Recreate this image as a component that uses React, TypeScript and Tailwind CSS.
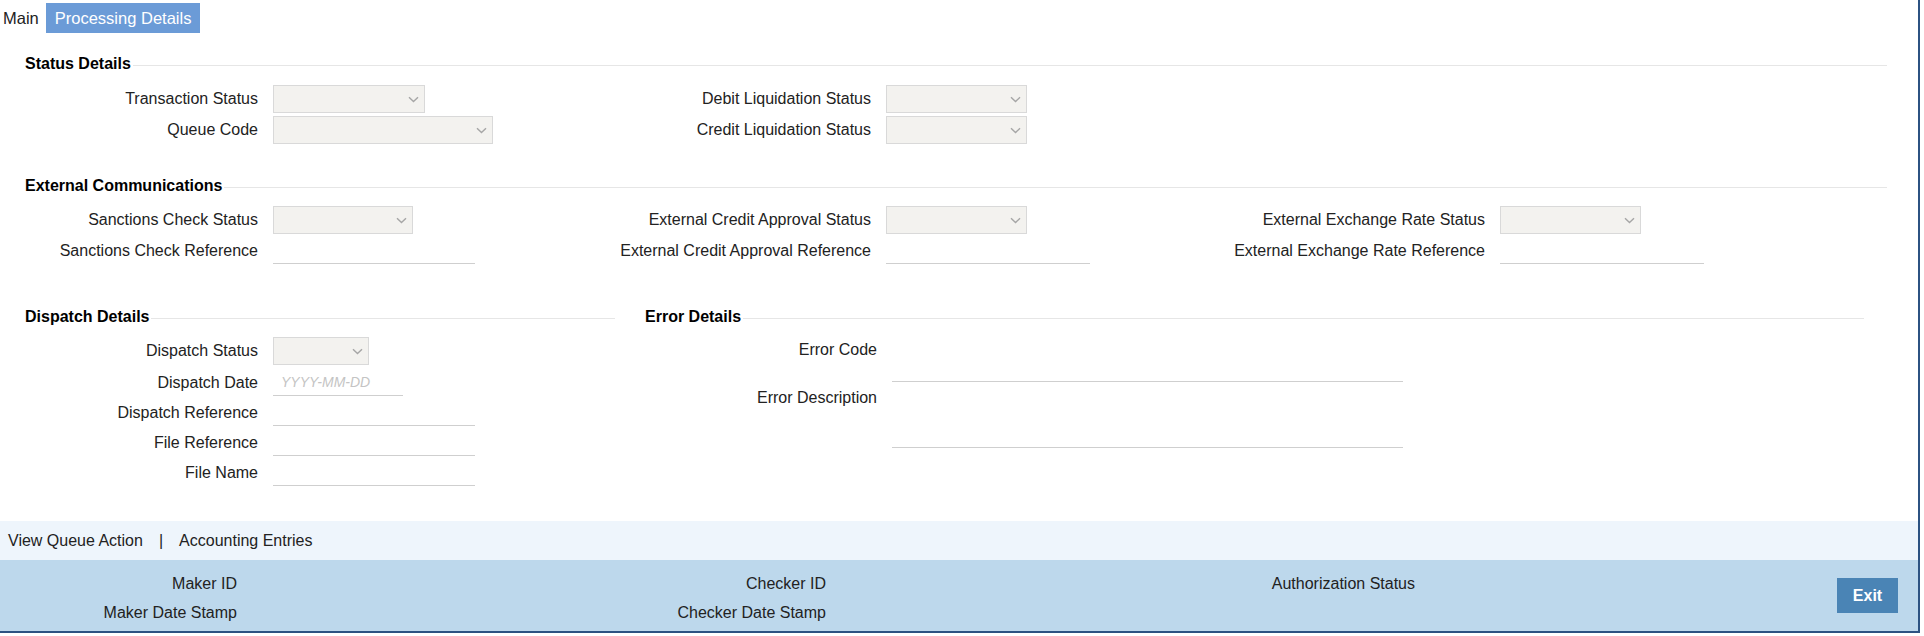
import React from "react";

const Chevron = () => (
  <svg width="11" height="7" viewBox="0 0 11 7">
    <path d="M1 1.2 L5.5 5.6 L10 1.2" fill="none" stroke="#a6a6a6" strokeWidth="1.4" />
  </svg>
);

const Select = ({ w }: { w: string }) => (
  <div className={`${w} h-[28px] border border-[#d9d9d9] bg-[#f3f2ef] flex items-center justify-end pr-[5px]`}>
    <Chevron />
  </div>
);

const TextInput = ({ w, placeholder }: { w: string; placeholder?: string }) => (
  <div className={`${w} h-[26px] border-b border-[#cfcfcf] flex items-center pl-[8px]`}>
    {placeholder ? (
      <span className="text-[14px] italic text-[#c4c4c4]">{placeholder}</span>
    ) : null}
  </div>
);

const Row = ({
  label,
  children,
  className = "",
  lw = "w-[258px]",
}: {
  label: string;
  children: React.ReactNode;
  className?: string;
  lw?: string;
}) => (
  <div className={`flex items-center gap-[15px] ${className}`}>
    <div className={`${lw} text-right whitespace-nowrap leading-[20px]`}>{label}</div>
    {children}
  </div>
);

const Heading = ({ title, className = "" }: { title: string; className?: string }) => (
  <div className={`flex items-start ${className}`}>
    <span className="font-bold text-black leading-[20px] whitespace-nowrap">{title}</span>
    <div className="flex-1 h-px bg-[#e6e6e6] mt-[11px] ml-[2px]" />
  </div>
);

export default function App() {
  return (
    <div className="w-[1920px] h-[633px] border-r-2 border-b-2 border-[#2c5282] flex flex-col bg-white text-[#222] text-[16px] font-['Liberation_Sans',Arial,sans-serif]">
      <div className="flex-1 flex flex-col">
        {/* Tabs */}
        <div className="mt-[3px] h-[30px] flex items-center pl-[3px] text-[16.5px]">
          <span>Main</span>
          <span className="ml-[7px] h-full px-[9px] flex items-center bg-[#6b9bd7] text-white">
            Processing Details
          </span>
        </div>

        {/* Status Details */}
        <Heading title="Status Details" className="mt-[21px] pl-[25px] pr-[31px]" />
        <div className="mt-[11px] flex">
          <div className="w-[613px] flex flex-col gap-[3px]">
            <Row label="Transaction Status">
              <Select w="w-[152px]" />
            </Row>
            <Row label="Queue Code">
              <Select w="w-[220px]" />
            </Row>
          </div>
          <div className="w-[615px] flex flex-col gap-[3px]">
            <Row label="Debit Liquidation Status">
              <Select w="w-[141px]" />
            </Row>
            <Row label="Credit Liquidation Status">
              <Select w="w-[141px]" />
            </Row>
          </div>
        </div>

        {/* External Communications */}
        <Heading title="External Communications" className="mt-[32px] pl-[25px] pr-[31px]" />
        <div className="mt-[10px] flex">
          <div className="w-[613px] flex flex-col gap-[4px]">
            <Row label="Sanctions Check Status">
              <Select w="w-[140px]" />
            </Row>
            <Row label="Sanctions Check Reference">
              <TextInput w="w-[202px]" />
            </Row>
          </div>
          <div className="w-[615px] flex flex-col gap-[4px]">
            <Row label="External Credit Approval Status">
              <Select w="w-[141px]" />
            </Row>
            <Row label="External Credit Approval Reference">
              <TextInput w="w-[204px]" />
            </Row>
          </div>
          <div className="w-[615px] flex flex-col gap-[4px]">
            <Row label="External Exchange Rate Status" lw="w-[257px]">
              <Select w="w-[141px]" />
            </Row>
            <Row label="External Exchange Rate Reference" lw="w-[257px]">
              <TextInput w="w-[204px]" />
            </Row>
          </div>
        </div>

        {/* Dispatch + Error */}
        <div className="mt-[43px] flex">
          <div className="w-[615px] flex flex-col">
            <Heading title="Dispatch Details" className="pl-[25px]" />
            <Row label="Dispatch Status" className="mt-[10px]">
              <Select w="w-[96px]" />
            </Row>
            <Row label="Dispatch Date" className="mt-[5px]">
              <TextInput w="w-[130px]" placeholder="YYYY-MM-DD" />
            </Row>
            <Row label="Dispatch Reference" className="mt-[4px]">
              <TextInput w="w-[202px]" />
            </Row>
            <Row label="File Reference" className="mt-[4px]">
              <TextInput w="w-[202px]" />
            </Row>
            <Row label="File Name" className="mt-[4px]">
              <TextInput w="w-[202px]" />
            </Row>
          </div>
          <div className="w-[1249px] flex flex-col">
            <Heading title="Error Details" className="pl-[30px]" />
            <div className="mt-[10px] flex items-start gap-[15px]">
              <div className="w-[262px] pt-[3px] text-right leading-[20px] whitespace-nowrap">Error Code</div>
              <div className="w-[511px] h-[45px] border-b border-[#cfcfcf]" />
            </div>
            <div className="mt-[4px] flex items-start gap-[15px]">
              <div className="w-[262px] pt-[2px] text-right leading-[20px] whitespace-nowrap">Error Description</div>
              <div className="w-[511px] h-[62px] border-b border-[#cfcfcf]" />
            </div>
          </div>
        </div>
      </div>

      {/* Footer links */}
      <div className="h-[39px] bg-[#eef5fc] flex items-center pl-[8px] gap-[16px]">
        <span>View Queue Action</span>
        <span>|</span>
        <span>Accounting Entries</span>
      </div>

      {/* Audit bar */}
      <div className="h-[71px] bg-[#bdd8ec] flex items-start">
        <div className="flex pt-[9px]">
          <div className="w-[589px] flex flex-col">
            <div className="w-[237px] h-[29px] flex items-center justify-end whitespace-nowrap">Maker ID</div>
            <div className="w-[237px] h-[29px] flex items-center justify-end whitespace-nowrap">Maker Date Stamp</div>
          </div>
          <div className="w-[589px] flex flex-col">
            <div className="w-[237px] h-[29px] flex items-center justify-end whitespace-nowrap">Checker ID</div>
            <div className="w-[237px] h-[29px] flex items-center justify-end whitespace-nowrap">Checker Date Stamp</div>
          </div>
          <div className="w-[589px] flex flex-col">
            <div className="w-[237px] h-[29px] flex items-center justify-end whitespace-nowrap">Authorization Status</div>
          </div>
        </div>
        <button className="ml-auto mr-[20px] self-center w-[61px] h-[35px] bg-[#4a84b5] text-white font-bold text-[16px]">
          Exit
        </button>
      </div>
    </div>
  );
}
